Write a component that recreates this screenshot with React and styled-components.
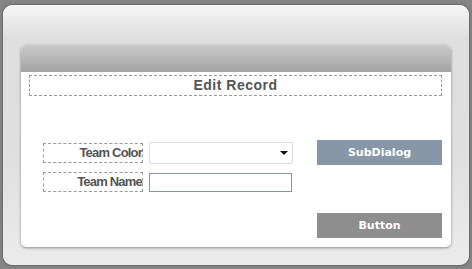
import React from "react";
import styled, { createGlobalStyle } from "styled-components";

const GlobalStyle = createGlobalStyle`
  html, body {
    margin: 0;
    padding: 0;
    background-color: #858585;
  }
`;

const Page = styled.div`
  box-sizing: border-box;
  width: 472px;
  height: 269px;
  padding: 5px 3px 4px 3px;
`;

const Frame = styled.div`
  box-sizing: border-box;
  height: 100%;
  border-radius: 9px;
  background: linear-gradient(#f6f6f6 0, #dedede 32px, #e0e0e0 60%, #ebebeb 100%);
  box-shadow: 0 0 2px 1px #666;
  padding: 40px 18px 18px 18px;
`;

const Card = styled.div`
  height: 100%;
  display: flex;
  flex-direction: column;
  border-radius: 5px;
  background-color: white;
  box-shadow: 0 1px 3px rgba(0, 0, 0, 0.4);
`;

const Header = styled.div`
  height: 27px;
  border-radius: 5px 5px 0 0;
  background: linear-gradient(#cacaca, #a2a2a2);
`;

const Body = styled.div`
  flex: 1;
  padding: 3px 9px 0 8px;
`;

const Title = styled.div`
  height: 19px;
  border: 1px dashed #9a9a9a;
  text-align: center;
  font-family: "Liberation Sans", Arial, sans-serif;
  font-weight: bold;
  font-size: 14px;
  letter-spacing: 0.5px;
  line-height: 18px;
  color: #555;
`;

const FormArea = styled.div`
  display: flex;
  justify-content: space-between;
  margin-top: 44px;
`;

const Fields = styled.div`
  display: flex;
  flex-direction: column;
  gap: 8px;
  margin-left: 14px;
  padding-top: 2px;
`;

const Row = styled.div`
  display: flex;
  align-items: center;
  gap: 6px;
`;

const Label = styled.div`
  box-sizing: border-box;
  width: 100px;
  height: 20px;
  border: 1px dashed #9a9a9a;
  text-align: right;
  font-family: "Liberation Sans", Arial, sans-serif;
  font-weight: bold;
  font-size: 13px;
  letter-spacing: -0.8px;
  line-height: 18px;
  color: #555;
  white-space: nowrap;
`;

const Select = styled.div`
  box-sizing: border-box;
  width: 144px;
  height: 22px;
  border: 1px solid #dcdcdc;
  border-radius: 2px;
  display: flex;
  align-items: center;
  justify-content: flex-end;
  padding-right: 4px;
`;

const Arrow = styled.span`
  width: 0;
  height: 0;
  border-left: 4px solid transparent;
  border-right: 4px solid transparent;
  border-top: 4px solid #111;
`;

const Input = styled.input`
  box-sizing: border-box;
  width: 143px;
  height: 19px;
  margin: 0;
  border: 1px solid #8194a8;
  outline: none;
  padding: 0;
`;

const Buttons = styled.div`
  display: flex;
  flex-direction: column;
  gap: 48px;
`;

const Btn = styled.div`
  width: 125px;
  height: 25px;
  background-color: ${(p) => p.$bg};
  color: white;
  font-family: "DejaVu Sans", Verdana, sans-serif;
  font-weight: bold;
  font-size: 11px;
  line-height: 25px;
  text-align: center;
`;

export default function App() {
  return (
    <Page>
      <GlobalStyle />
      <Frame>
        <Card>
          <Header />
          <Body>
            <Title>Edit Record</Title>
            <FormArea>
              <Fields>
                <Row>
                  <Label>Team Color</Label>
                  <Select>
                    <Arrow />
                  </Select>
                </Row>
                <Row>
                  <Label>Team Name</Label>
                  <Input />
                </Row>
              </Fields>
              <Buttons>
                <Btn $bg="#8797a8">SubDialog</Btn>
                <Btn $bg="#8e8e8e">Button</Btn>
              </Buttons>
            </FormArea>
          </Body>
        </Card>
      </Frame>
    </Page>
  );
}
